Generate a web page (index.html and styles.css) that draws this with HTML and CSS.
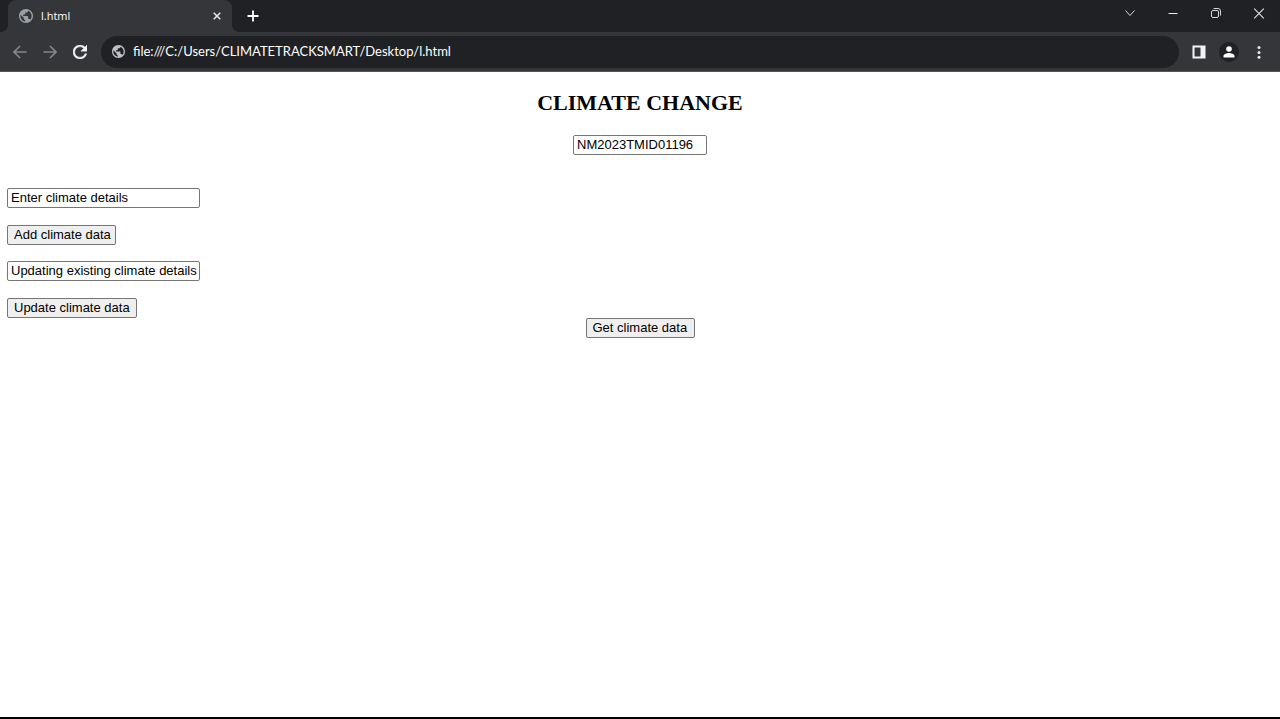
FILE: index.html
```html
<!DOCTYPE html>
<html lang="en">
<head>
<meta charset="utf-8">
<title>l.html</title>
<link rel="stylesheet" href="styles.css">
</head>
<body>
<svg class="defs" width="0" height="0" aria-hidden="true">
  <symbol id="globe" viewBox="2 2 20 20">
    <path d="M12 2C6.480 2 2 6.480 2 12s4.480 10 10 10 10-4.480 10-10S17.520 2 12 2zm-1 17.930c-3.950-.490-7-3.850-7-7.930 0-.620.080-1.210.210-1.790L9 15v1c0 1.100.900 2 2 2v1.930zm6.900-2.540c-.260-.810-1-1.390-1.900-1.390h-1v-3c0-.550-.450-1-1-1H8v-2h2c.550 0 1-.450 1-1V7h2c1.100 0 2-.900 2-2v-.410c2.930 1.190 5 4.060 5 7.410 0 2.080-.800 3.970-2.100 5.390z"/>
  </symbol>
</svg>
<header class="browser">
  <div class="tabstrip">
    <div class="tab">
      <svg class="tab-icon" width="14" height="14"><use href="#globe"/></svg>
      <span class="tab-title">l.html</span>
      <button class="icon-button tab-close" aria-label="Close tab"><svg width="8" height="8" viewBox="0 0 8 8"><path d="M.7.700l6.600 6.600M7.300.700L.7 7.300" stroke="#e8eaed" stroke-width="1.500"/></svg></button>
    </div>
    <button class="icon-button new-tab" aria-label="New tab"><svg width="12" height="12" viewBox="0 0 12 12"><path d="M6 .5v11M.5 6h11" stroke="#fff" stroke-width="1.800"/></svg></button>
    <div class="window-controls">
      <button class="icon-button" aria-label="Search tabs"><svg width="12" height="12" viewBox="0 0 12 12"><path d="M1.500 3.500L6 8.500l4.500-5" fill="none" stroke="#d5d6d8"/></svg></button>
      <button class="icon-button" aria-label="Minimize"><svg width="12" height="12" viewBox="0 0 12 12"><path d="M1.500 6.500h9" stroke="#e8eaed"/></svg></button>
      <button class="icon-button" aria-label="Restore"><svg width="12" height="12" viewBox="0 0 12 12" fill="none" stroke="#d5d6d8"><rect x="1.500" y="3.500" width="7" height="7" rx="1.500"/><path d="M3.500 1.500H8a2.500 2.500 0 0 1 2.500 2.500v4.500"/></svg></button>
      <button class="icon-button" aria-label="Close"><svg width="12" height="12" viewBox="0 0 12 12"><path d="M1.200 1.700l9.600 9.600M10.800 1.700l-9.600 9.600" stroke="#e0e1e3" stroke-width="1.100"/></svg></button>
    </div>
  </div>
  <div class="toolbar">
    <div class="nav">
      <button class="icon-button" aria-label="Back"><svg width="14" height="14" viewBox="0 0 14 14"><path d="M13.500 7H1.500M7 1L1 7l6 6" fill="none" stroke="#85878a" stroke-width="1.600"/></svg></button>
      <button class="icon-button" aria-label="Forward"><svg width="14" height="14" viewBox="0 0 14 14"><path d="M.5 7h12M7 1l6 6-6 6" fill="none" stroke="#85878a" stroke-width="1.600"/></svg></button>
      <button class="icon-button" aria-label="Reload"><svg width="14" height="14" viewBox="4 4 16 16"><path fill="#f1f3f4" stroke="#f1f3f4" stroke-width=".5" d="M17.650 6.350C16.200 4.900 14.210 4 12 4c-4.420 0-7.990 3.580-7.990 8s3.570 8 7.990 8c3.730 0 6.840-2.550 7.730-6h-2.080c-.820 2.330-3.040 4-5.650 4-3.310 0-6-2.690-6-6s2.690-6 6-6c1.660 0 3.140.690 4.220 1.780L13 11h7V4l-2.350 2.350z"/></svg></button>
    </div>
    <div class="address">
      <svg class="address-icon" width="13" height="13"><use href="#globe"/></svg>
      <input class="address-input" aria-label="Address" value="file:///C:/Users/CLIMATETRACKSMART/Desktop/l.html">
    </div>
    <div class="actions">
      <button class="icon-button" aria-label="Side panel"><svg width="14" height="14" viewBox="0 0 14 14"><path fill="#f1f3f4" fill-rule="evenodd" d="M.5.500h13v13H.500zM2.500 2.500v9h6v-9z"/></svg></button>
      <button class="icon-button profile" aria-label="Profile"><svg width="12" height="12" viewBox="0 0 12 12" fill="#fff"><circle cx="6" cy="3" r="2.800"/><path d="M.5 11.500V10C.5 8 4 7 6 7s5.500 1 5.500 3v1.500z"/></svg></button>
      <button class="icon-button" aria-label="Menu"><svg width="14" height="14" viewBox="0 0 14 14" fill="#e8eaed"><circle cx="7" cy="2.500" r="1.500"/><circle cx="7" cy="7.500" r="1.500"/><circle cx="7" cy="12.300" r="1.500"/></svg></button>
    </div>
  </div>
</header>
<main class="page">
  <h1 class="title">CLIMATE CHANGE</h1>
  <input class="field field-id" aria-label="ID" value="NM2023TMID01196">
  <div class="forms">
    <form class="form">
      <input class="field" aria-label="Climate details" value="Enter climate details">
      <button class="button" type="button">Add climate data</button>
    </form>
    <form class="form">
      <input class="field" aria-label="Updated climate details" value="Updating existing climate details">
      <button class="button button-wide" type="button">Update climate data</button>
    </form>
  </div>
  <button class="button" type="button">Get climate data</button>
</main>
</body>
</html>
```
FILE: styles.css
```css
* {
  box-sizing: border-box;
}

body {
  margin: 0;
  min-height: 100vh;
  display: flex;
  flex-direction: column;
  background: #fff;
  border-bottom: 2px solid #000;
}

.defs {
  position: absolute;
}

.browser {
  background: #35363a;
  border-bottom: 1px solid #56575a;
  font-family: Lato, "Open Sans", sans-serif;
  font-size: 13px;
  color: #fff;
}

.icon-button {
  display: flex;
  align-items: center;
  justify-content: center;
  padding: 0;
  border: 0;
  background: none;
}

.tabstrip {
  display: flex;
  align-items: center;
  height: 32px;
  padding-left: 8px;
  background: #202124;
}

.tab {
  position: relative;
  display: flex;
  align-items: center;
  width: 224px;
  height: 32px;
  padding: 0 11px;
  border-radius: 8px 8px 0 0;
  background: #35363a;
}

.tab::before,
.tab::after {
  content: "";
  position: absolute;
  bottom: 0;
  width: 8px;
  height: 8px;
}

.tab::before {
  right: 100%;
  background: radial-gradient(circle at 0 0, #202124 8px, #35363a 8px);
}

.tab::after {
  left: 100%;
  background: radial-gradient(circle at 100% 0, #202124 8px, #35363a 8px);
}

.tab-icon {
  fill: #9aa0a6;
}

.tab-title {
  flex: 1;
  padding-left: 8px;
  font: 11px/14px "Open Sans", "Noto Sans", sans-serif;
}

.new-tab {
  width: 42px;
  height: 32px;
}

.window-controls {
  display: flex;
  align-self: flex-start;
  margin-left: auto;
}

.window-controls .icon-button {
  width: 43px;
  height: 26px;
}

.toolbar {
  display: flex;
  align-items: center;
  height: 39px;
  padding: 0 6px 0 5px;
}

.nav,
.actions {
  display: flex;
}

.nav .icon-button,
.actions .icon-button {
  width: 30px;
  height: 30px;
}

.nav {
  margin-right: 6px;
}

.actions {
  margin-left: 5px;
}

.actions .profile {
  width: 20px;
  height: 20px;
  margin: 5px;
  border-radius: 50%;
  background: #202124;
}

.address {
  flex: 1;
  display: flex;
  align-items: center;
  gap: 8px;
  height: 32px;
  padding: 0 11px;
  border-radius: 16px;
  background: #202124;
}

.address-icon {
  fill: #bdc1c6;
}

.address-input {
  flex: 1;
  padding: 0 0 1px;
  border: 0;
  outline: 0;
  background: none;
  font: inherit;
  color: #fff;
}

.page {
  flex: 1;
  display: flex;
  flex-direction: column;
  align-items: center;
  padding: 18px 7px;
}

.title {
  margin: 0 0 19px;
  font: bold 22px/26px "Liberation Serif", serif;
  color: #000;
}

.field,
.button {
  height: 20px;
  border: 1px solid #767676;
  border-radius: 2px;
  font: 13px/16px "Liberation Sans", sans-serif;
  color: #000;
}

.field {
  width: 193px;
  padding: 0 1px 1px 3px;
  background: #fff;
}

.field-id {
  width: 134px;
}

.button {
  width: 109px;
  padding: 0 4px 0 6px;
  background: #efefef;
  text-align: left;
  white-space: nowrap;
}

.button-wide {
  width: 130px;
}

.forms {
  align-self: stretch;
  display: flex;
  flex-direction: column;
  gap: 16px;
  margin-top: 33px;
}

.form {
  display: flex;
  flex-direction: column;
  align-items: flex-start;
  gap: 17px;
}
```
